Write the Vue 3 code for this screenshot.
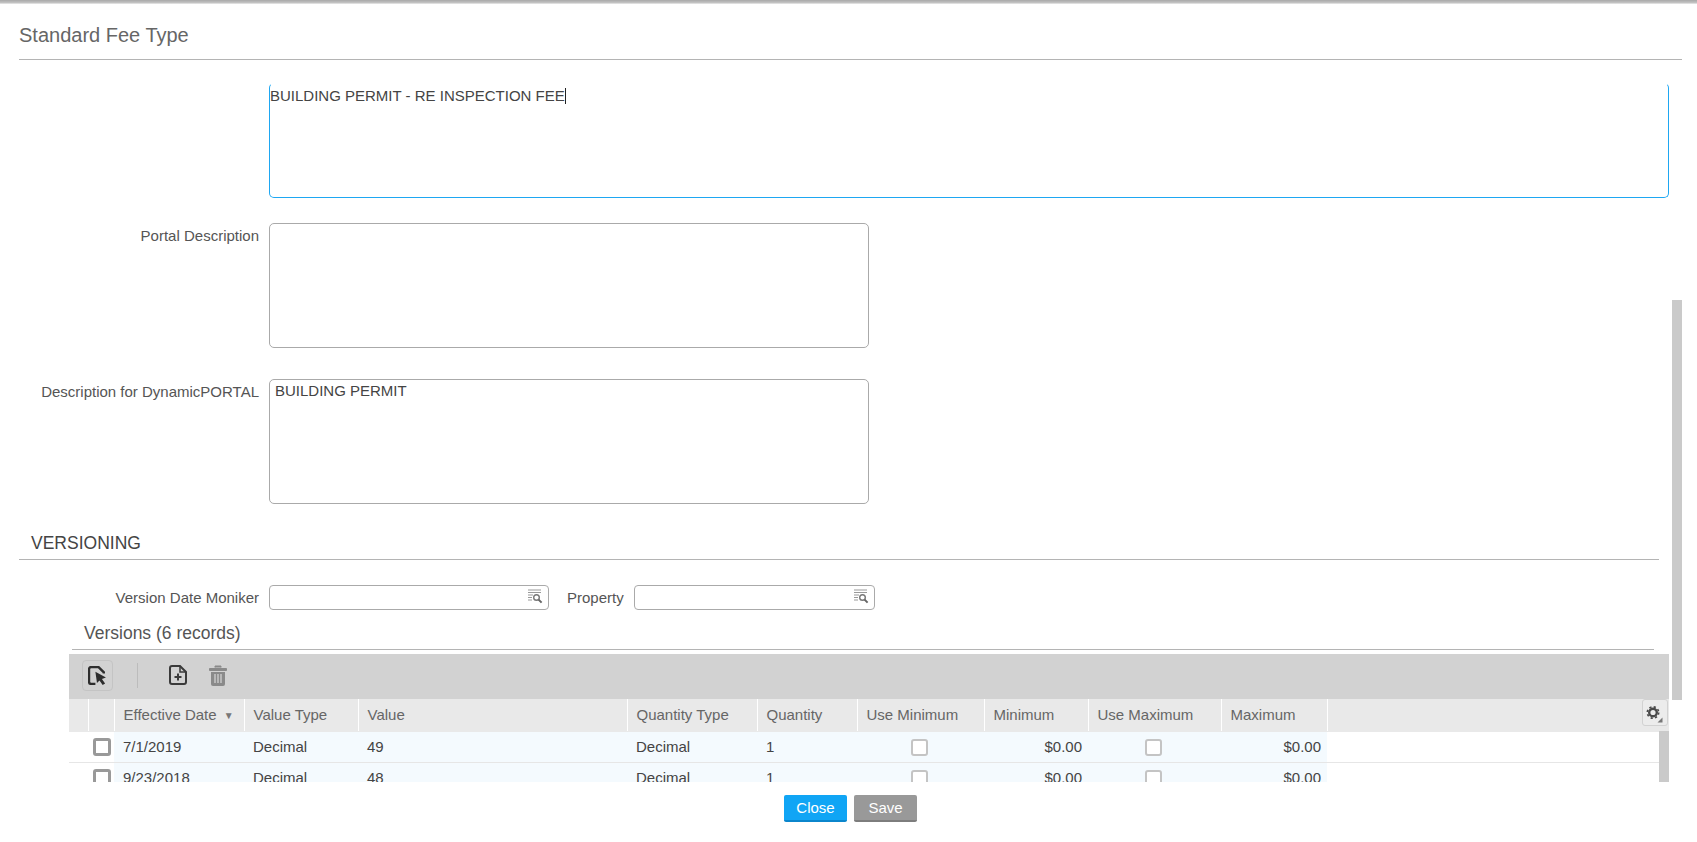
<template>
  <div class="page">
    <div class="top-bar"></div>
    <h1 class="title">Standard Fee Type</h1>

    <div class="body">
      <!-- 表单上半部分 -->
      <div class="form-row first">
        <label class="label"></label>
        <div class="focus-box">BUILDING PERMIT - RE INSPECTION FEE<span class="caret"></span></div>
      </div>
      <div class="form-row portal">
        <label class="label">Portal Description</label>
        <textarea class="area" readonly></textarea>
      </div>
      <div class="form-row dynamic">
        <label class="label">Description for DynamicPORTAL</label>
        <textarea class="area" readonly>BUILDING PERMIT</textarea>
      </div>

      <h2 class="section">VERSIONING</h2>

      <div class="form-row lookups">
        <label class="label">Version Date Moniker</label>
        <div class="lookup moniker">
          <svg class="lookup-icon" viewBox="0 0 16 15" width="16" height="15">
            <path d="M1 1h13M1 3.5h13M1 6h5M1 8.5h4M1 11h4" stroke="#999" stroke-width="1.2" fill="none" />
            <circle cx="9.5" cy="8.5" r="2.8" stroke="#777" stroke-width="1.4" fill="#fff" />
            <path d="M11.6 10.6l3 3" stroke="#666" stroke-width="2" />
          </svg>
        </div>
        <label class="label-inline">Property</label>
        <div class="lookup property">
          <svg class="lookup-icon" viewBox="0 0 16 15" width="16" height="15">
            <path d="M1 1h13M1 3.5h13M1 6h5M1 8.5h4M1 11h4" stroke="#999" stroke-width="1.2" fill="none" />
            <circle cx="9.5" cy="8.5" r="2.8" stroke="#777" stroke-width="1.4" fill="#fff" />
            <path d="M11.6 10.6l3 3" stroke="#666" stroke-width="2" />
          </svg>
        </div>
      </div>

      <div class="versions-title">Versions (6 records)</div>

      <div class="grid-wrap">
        <div class="toolbar">
          <button class="tool-btn">
            <svg viewBox="0 0 18 18" width="19" height="19">
              <path d="M7 17H3a2 2 0 0 1-2-2V3a2 2 0 0 1 2-2h7l5 5v1" stroke="#2e2e2e" stroke-width="2.200" fill="none" />
              <path d="M7 5.500l10 5.500-3.800 1.300 3 4.200-2.300 1.500-3-4.300L8.500 16z" fill="#2e2e2e" />
            </svg>
          </button>
          <span class="tool-sep"></span>
          <svg class="tool-new" viewBox="0 0 18 20" width="18" height="20">
            <path d="M3 1h8l6 6v10a2 2 0 0 1-2 2H3a2 2 0 0 1-2-2V3a2 2 0 0 1 2-2z" stroke="#3a3a3a" stroke-width="2" fill="none" />
            <path d="M11 1v6h6" stroke="#3a3a3a" stroke-width="1.500" fill="none" />
            <path d="M9 8.500v7M5.500 12h7" stroke="#3a3a3a" stroke-width="2" />
          </svg>
          <svg class="tool-trash" viewBox="0 0 18 21" width="18" height="21">
            <path d="M6 2.500V1h6v1.500M0.500 3.500h17v2h-17z" fill="#8a8a8a" stroke="#8a8a8a" />
            <path d="M2 7h14v12a2 2 0 0 1-2 2H4a2 2 0 0 1-2-2z" fill="#8a8a8a" />
            <path d="M6 9v9M9 9v9M12 9v9" stroke="#d2d2d2" stroke-width="1.300" />
          </svg>
        </div>

        <table class="grid">
          <colgroup>
            <col v-for="(w, i) in colWidths" :key="i" :style="{ width: w + 'px' }" />
            <col />
          </colgroup>
          <thead>
            <tr>
              <th></th>
              <th></th>
              <th>Effective Date <span class="sort">▼</span></th>
              <th v-for="h in headers" :key="h">{{ h }}</th>
              <th class="filler"></th>
            </tr>
          </thead>
          <tbody>
            <tr v-for="row in rows" :key="row.date">
              <td class="select" colspan="2"><span class="check dark"></span></td>
              <td class="cell">{{ row.date }}</td>
              <td class="cell">Decimal</td>
              <td class="cell">{{ row.value }}</td>
              <td class="cell">Decimal</td>
              <td class="cell">1</td>
              <td class="cell center"><span class="check"></span></td>
              <td class="cell right">$0.00</td>
              <td class="cell center"><span class="check"></span></td>
              <td class="cell right">$0.00</td>
              <td></td>
            </tr>
          </tbody>
        </table>

        <button class="gear-btn">
          <svg viewBox="0 0 24 24" width="24" height="24">
            <circle cx="10" cy="11.500" r="3.800" stroke="#4a4a4a" stroke-width="2.400" fill="none" />
            <circle cx="10" cy="11.500" r="5.700" stroke="#4a4a4a" stroke-width="1.600" fill="none" stroke-dasharray="2.200 2.280" />
            <path d="M19.500 16.500v5h-5z" fill="#777" />
          </svg>
        </button>
        <div class="inner-scroll"></div>
      </div>

      <div class="outer-scroll"></div>
    </div>

    <div class="footer">
      <button class="btn close">Close</button>
      <button class="btn save">Save</button>
    </div>
  </div>
</template>

<script setup>
const colWidths = [19, 26, 130, 114, 269, 130, 100, 127, 104, 133, 106]

const headers = [
  'Value Type',
  'Value',
  'Quantity Type',
  'Quantity',
  'Use Minimum',
  'Minimum',
  'Use Maximum',
  'Maximum',
]

const rows = [
  { date: '7/1/2019', value: '49' },
  { date: '9/23/2018', value: '48' },
]
</script>

<style>
html,
body {
  margin: 0;
  background: #fff;
}
</style>

<style scoped>
.page {
  height: 842px;
  display: flex;
  flex-direction: column;
  overflow: hidden;
  font-family: "Liberation Sans", Arial, sans-serif;
  font-size: 15px;
  color: #555;
}

.top-bar {
  height: 4px;
  flex: none;
  background: linear-gradient(#a8a8a8, #c4c4c4 70%, #f0f0f0);
}

.title {
  flex: none;
  margin: 0 15px 0 19px;
  height: 56px;
  box-sizing: border-box;
  border-bottom: 1px solid #b4b4b4;
  padding-top: 20px;
  font-size: 20px;
  line-height: 22px;
  font-weight: normal;
  color: #666;
}

.body {
  flex: none;
  height: 722px;
  position: relative;
  overflow: hidden;
}

.form-row {
  display: flex;
  align-items: flex-start;
}

.form-row.first {
  margin-top: 23px;
}

.form-row.portal {
  margin-top: 25px;
}

.form-row.dynamic {
  margin-top: 31px;
}

.label {
  width: 240px;
  margin: 5px 10px 0 19px;
  flex: none;
  text-align: right;
  line-height: 16px;
  white-space: nowrap;
  color: #555;
}

.focus-box {
  width: 1400px;
  height: 115px;
  box-sizing: border-box;
  border: 1px solid #1ea7f2;
  border-top-color: transparent;
  border-radius: 5px;
  padding: 4px 0;
  line-height: 16px;
  color: #444;
}

.caret {
  display: inline-block;
  width: 1px;
  height: 16px;
  background: #222;
  vertical-align: top;
}

.area {
  display: block;
  width: 600px;
  height: 125px;
  box-sizing: border-box;
  border: 1px solid #aaa;
  border-radius: 5px;
  padding: 3px 5px;
  margin: 0;
  resize: none;
  outline: none;
  font: 15px/16px "Liberation Sans", Arial, sans-serif;
  color: #444;
}

.section {
  margin: 30px 38px 0 19px;
  height: 25px;
  padding-left: 12px;
  border-bottom: 1px solid #b4b4b4;
  font-size: 17.500px;
  line-height: 18px;
  font-weight: normal;
  color: #444;
}

.form-row.lookups {
  margin-top: 25px;
  height: 25px;
  align-items: center;
}

.lookups .label {
  margin-top: 0;
}

.lookup {
  height: 25px;
  box-sizing: border-box;
  border: 1px solid #aaa;
  border-radius: 4px;
  position: relative;
}

.moniker {
  width: 280px;
}

.property {
  width: 241px;
}

.lookup-icon {
  position: absolute;
  right: 5px;
  top: 3px;
}

.label-inline {
  margin: 0 10px 0 18px;
}

.versions-title {
  margin: 13px 43px 0 72px;
  height: 26px;
  padding-left: 12px;
  border-bottom: 1px solid #b4b4b4;
  font-size: 17.500px;
  line-height: 20px;
  color: #555;
}

.grid-wrap {
  position: relative;
  margin: 4px 28px 0 69px;
}

.toolbar {
  height: 45px;
  box-sizing: border-box;
  padding: 0 0 3px 13px;
  background: #d2d2d2;
  display: flex;
  align-items: center;
}

.tool-btn {
  width: 31px;
  height: 31px;
  box-sizing: border-box;
  padding: 0;
  border: 1px solid #c4c4c4;
  border-radius: 4px;
  background: transparent;
  display: flex;
  align-items: center;
  justify-content: center;
}

.tool-sep {
  width: 1px;
  height: 25px;
  background: #bcbcbc;
  margin: 0 31px 0 24px;
}

.tool-trash {
  margin-left: 22px;
}

.grid {
  width: 100%;
  table-layout: fixed;
  border-collapse: collapse;
  font-size: 15px;
}

.grid th {
  height: 32px;
  padding: 0 0 0 9px;
  box-sizing: border-box;
  background: #e9e9e9;
  border-right: 1px solid #fff;
  border-bottom: 1px solid #e9e9e9;
  text-align: left;
  font-weight: normal;
  color: #666;
  white-space: nowrap;
  overflow: hidden;
}

.grid th.filler {
  border-right: none;
}

.sort {
  font-size: 10px;
  color: #777;
  margin-left: 3px;
  vertical-align: 1px;
}

.grid td {
  height: 31px;
  box-sizing: border-box;
  padding: 0;
  border-bottom: 1px solid #e6e6e6;
  color: #444;
}

.grid td.cell {
  padding: 0 6px 0 9px;
  background: #f4fafe;
}

.grid td.cell.center {
  padding: 0 3px 0 0;
}

.grid td.select {
  padding-right: 3px;
  text-align: right;
}

.center {
  text-align: center;
}

.right {
  text-align: right;
}

.check {
  display: inline-block;
  width: 17px;
  height: 17px;
  box-sizing: border-box;
  border: 2px solid #c4c4c4;
  border-radius: 3px;
  background: #fff;
  vertical-align: middle;
}

.check.dark {
  width: 18px;
  height: 18px;
  border: 3px solid #999;
}

.gear-btn {
  position: absolute;
  right: 1px;
  top: 45px;
  width: 26px;
  height: 27px;
  padding: 0;
  box-sizing: border-box;
  border: 1px solid #d2d2d2;
  border-radius: 3px;
  background: #ececec;
  display: flex;
  align-items: center;
  justify-content: center;
}

.inner-scroll {
  position: absolute;
  right: 0;
  top: 77px;
  width: 10px;
  height: 100px;
  background: #cacaca;
}

.outer-scroll {
  position: absolute;
  right: 15px;
  top: 240px;
  width: 10px;
  height: 400px;
  background: #cacaca;
}

.footer {
  flex: 1;
  display: flex;
  justify-content: center;
  gap: 7px;
  padding: 13px 0 0 4px;
}

.btn {
  width: 63px;
  height: 27px;
  box-sizing: border-box;
  padding: 0;
  border: none;
  border-radius: 2px;
  font: 15px "Liberation Sans", Arial, sans-serif;
  color: #fff;
}

.close {
  background: #10a5f5;
  border-bottom: 2px solid #0b86cc;
}

.save {
  background: #999;
  border-bottom: 2px solid #7d7d7d;
}
</style>
